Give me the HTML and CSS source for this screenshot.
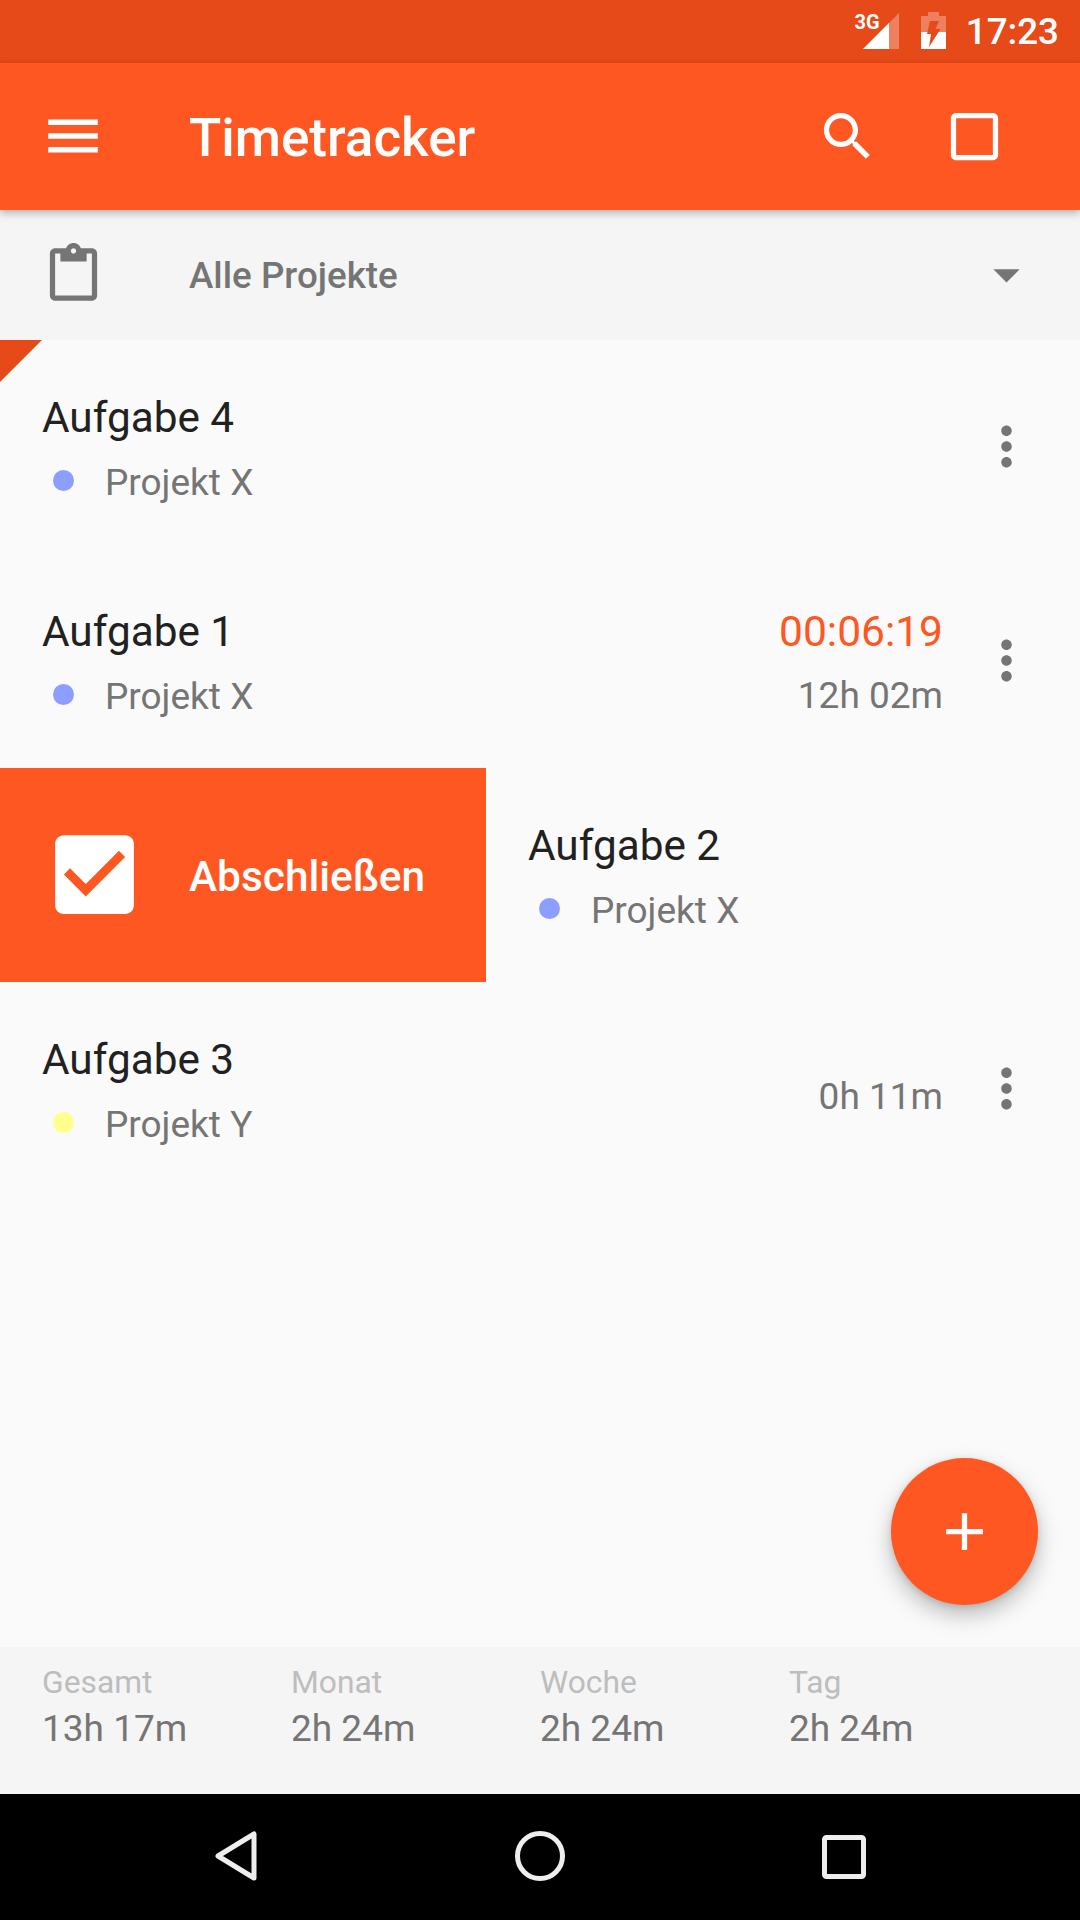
FILE: index.html
```html
<!DOCTYPE html>
<html lang="de">
<head>
<meta charset="utf-8">
<title>Timetracker</title>
<link rel="stylesheet" href="styles.css">
</head>
<body>
<div class="app">
  <div class="statusbar">
    <svg class="sb-signal" width="48" height="63" viewBox="0 0 48 63">
      <path d="M12 49 48 13V49Z" fill="#fff" fill-opacity=".3"/>
      <path d="M12 49 38 23V49Z" fill="#fff"/>
      <text x="3.5" y="29" class="sb-3g">3G</text>
    </svg>
    <svg class="sb-battery" width="25" height="63" viewBox="0 0 25 63">
      <path d="M0 16H7V12H18V16H25V49H0Z" fill="#fff" fill-opacity=".3"/>
      <path d="M0 32H25V49H0Z" fill="#fff"/>
      <path d="M9 21H18L14.5 29H19.5L8 47 10 34H6Z" fill="#E64A19"/>
    </svg>
    <span class="sb-time">17:23</span>
  </div>

  <header class="appbar">
    <svg class="icon icon-menu" viewBox="0 0 24 24"><path d="M3 18h18v-2H3v2zm0-5h18v-2H3v2zm0-7v2h18V6H3z"/></svg>
    <h1 class="appbar-title">Timetracker</h1>
    <svg class="icon" viewBox="0 0 24 24"><path d="M15.5 14h-.79l-.28-.27C15.41 12.59 16 11.11 16 9.5 16 5.91 13.09 3 9.5 3S3 5.91 3 9.5 5.91 16 9.5 16c1.61 0 3.09-.59 4.23-1.57l.27.28v.79l5 4.99L20.49 19l-4.99-5zm-6 0C7.01 14 5 11.99 5 9.5S7.01 5 9.5 5 14 7.01 14 9.5 11.99 14 9.5 14z"/></svg>
    <svg class="icon icon-stop" viewBox="0 0 24 24"><path d="M19 5v14H5V5h14m0-2H5c-1.1 0-2 .9-2 2v14c0 1.1.9 2 2 2h14c1.1 0 2-.9 2-2V5c0-1.1-.9-2-2-2z"/></svg>
  </header>

  <div class="filterbar">
    <svg class="icon icon-grey" viewBox="0 0 24 24"><path d="M19 2h-4.18C14.4.84 13.3 0 12 0c-1.3 0-2.4.84-2.82 2H5c-1.1 0-2 .9-2 2v16c0 1.1.9 2 2 2h14c1.1 0 2-.9 2-2V4c0-1.1-.9-2-2-2zm-7 0c.55 0 1 .45 1 1s-.45 1-1 1-1-.45-1-1 .45-1 1-1zm7 18H5V4h2v3h10V4h2v16z"/></svg>
    <span class="filter-label">Alle Projekte</span>
    <svg class="icon icon-grey" viewBox="0 0 24 24"><path d="M7 10l5 5 5-5z"/></svg>
  </div>

  <main class="list">
    <div class="corner"></div>

    <div class="task">
      <div class="task-body">
        <div class="task-title">Aufgabe 4</div>
        <div class="task-project"><span class="dot dot-blue"></span>Projekt X</div>
      </div>
      <svg class="icon icon-grey icon-more" viewBox="0 0 24 24"><path d="M12 8c1.1 0 2-.9 2-2s-.9-2-2-2-2 .9-2 2 .9 2 2 2zm0 2c-1.1 0-2 .9-2 2s.9 2 2 2 2-.9 2-2-.9-2-2-2zm0 6c-1.1 0-2 .9-2 2s.9 2 2 2 2-.9 2-2-.9-2-2-2z"/></svg>
    </div>

    <div class="task">
      <div class="task-body">
        <div class="task-title">Aufgabe 1</div>
        <div class="task-project"><span class="dot dot-blue"></span>Projekt X</div>
      </div>
      <div class="task-times">
        <div class="timer">00:06:19</div>
        <div class="duration">12h 02m</div>
      </div>
      <svg class="icon icon-grey icon-more" viewBox="0 0 24 24"><path d="M12 8c1.1 0 2-.9 2-2s-.9-2-2-2-2 .9-2 2 .9 2 2 2zm0 2c-1.1 0-2 .9-2 2s.9 2 2 2 2-.9 2-2-.9-2-2-2zm0 6c-1.1 0-2 .9-2 2s.9 2 2 2 2-.9 2-2-.9-2-2-2z"/></svg>
    </div>

    <div class="task task-swiped">
      <div class="swipe-action">
        <svg class="swipe-icon" viewBox="0 0 24 24"><path d="M19 3H5c-1.11 0-2 .9-2 2v14c0 1.1.89 2 2 2h14c1.11 0 2-.9 2-2V5c0-1.1-.89-2-2-2zm-9 14l-5-5 1.41-1.41L10 14.17l7.59-7.59L19 8l-9 9z"/></svg>
        <span class="swipe-label">Abschließen</span>
      </div>
      <div class="task-body">
        <div class="task-title">Aufgabe 2</div>
        <div class="task-project"><span class="dot dot-blue"></span>Projekt X</div>
      </div>
    </div>

    <div class="task">
      <div class="task-body">
        <div class="task-title">Aufgabe 3</div>
        <div class="task-project"><span class="dot dot-yellow"></span>Projekt Y</div>
      </div>
      <div class="task-times task-times-single">
        <div class="duration">0h 11m</div>
      </div>
      <svg class="icon icon-grey icon-more" viewBox="0 0 24 24"><path d="M12 8c1.1 0 2-.9 2-2s-.9-2-2-2-2 .9-2 2 .9 2 2 2zm0 2c-1.1 0-2 .9-2 2s.9 2 2 2 2-.9 2-2-.9-2-2-2zm0 6c-1.1 0-2 .9-2 2s.9 2 2 2 2-.9 2-2-.9-2-2-2z"/></svg>
    </div>

    <button class="fab" type="button" aria-label="Neu">
      <svg class="fab-icon" viewBox="0 0 24 24"><path d="M19 13h-6v6h-2v-6H5v-2h6V5h2v6h6v2z"/></svg>
    </button>
  </main>

  <footer class="summary">
    <div class="stat"><div class="stat-label">Gesamt</div><div class="stat-value">13h 17m</div></div>
    <div class="stat"><div class="stat-label">Monat</div><div class="stat-value">2h 24m</div></div>
    <div class="stat"><div class="stat-label">Woche</div><div class="stat-value">2h 24m</div></div>
    <div class="stat"><div class="stat-label">Tag</div><div class="stat-value">2h 24m</div></div>
  </footer>

  <nav class="navbar">
    <svg class="nav-back" width="44" height="52" viewBox="0 0 44 52"><path d="M40 4V48L4 26Z"/></svg>
    <svg class="nav-home" width="52" height="52" viewBox="0 0 52 52"><circle cx="26" cy="26" r="22.5"/></svg>
    <svg class="nav-recent" width="46" height="46" viewBox="0 0 46 46"><rect x="3.5" y="3.5" width="39" height="39" rx="2"/></svg>
  </nav>
</div>
</body>
</html>
```

FILE: styles.css
```css
* { box-sizing: border-box; }

html, body {
  margin: 0;
  padding: 0;
}

body {
  font-family: Roboto, "Noto Sans", sans-serif;
  background: #fafafa;
}

.app {
  width: 1080px;
  height: 1920px;
  display: flex;
  flex-direction: column;
  overflow: hidden;
}

/* Status bar */
.statusbar {
  height: 63px;
  flex: none;
  background: #e64a19;
  color: #fff;
  display: flex;
  align-items: center;
  justify-content: flex-end;
  padding-right: 21px;
}

.sb-signal { display: block; margin-right: 22px; }
.sb-battery { display: block; margin-right: 20px; }

.sb-3g {
  font-family: Roboto, sans-serif;
  font-size: 20px;
  font-weight: 700;
  fill: #fff;
}

.sb-time {
  font-size: 36.75px;
  font-weight: 500;
  line-height: 63px;
}

/* App bar */
.appbar {
  height: 147px;
  flex: none;
  background: #ff5722;
  color: #fff;
  display: flex;
  align-items: center;
  padding: 0 74px 1px 40px;
  position: relative;
  z-index: 2;
  box-shadow: 0 3px 8px rgba(0, 0, 0, .28);
}

.icon {
  width: 63px;
  height: 63px;
  flex: none;
  display: block;
  fill: currentColor;
}

.icon-menu {
  width: 66px;
  height: 66px;
}

.icon-stop { margin-left: 64px; }
.icon-grey { color: #757575; }
.icon-more { margin-bottom: 2px; }

.appbar-title {
  margin: 4px 0 0 83px;
  flex: 1;
  font-size: 53px;
  font-weight: 500;
  line-height: 64px;
}

/* Project filter */
.filterbar {
  height: 130px;
  flex: none;
  background: #f5f5f5;
  display: flex;
  align-items: center;
  padding: 0 42px 2px;
}

.filter-label {
  flex: 1;
  margin: 2px 0 0 84px;
  font-size: 36.75px;
  font-weight: 500;
  color: #757575;
}

/* Task list */
.list {
  flex: 1;
  position: relative;
  background: #fafafa;
}

.corner {
  position: absolute;
  left: 0;
  top: 0;
  width: 0;
  height: 0;
  border-top: 42px solid #e64a19;
  border-right: 42px solid transparent;
}

.task {
  height: 214px;
  display: flex;
  align-items: center;
  padding-right: 42px;
}

.task-swiped {
  padding-right: 0;
  align-items: stretch;
}

.task-body {
  flex: 1;
  align-self: flex-start;
  padding: 46px 0 0 42px;
}

.task-title {
  font-size: 42.3px;
  line-height: 64px;
  color: #212121;
}

.task-project {
  display: flex;
  align-items: center;
  font-size: 37px;
  line-height: 64px;
  padding-top: 1px;
  color: #757575;
}

.dot {
  width: 21px;
  height: 21px;
  border-radius: 50%;
  margin: -5px 31px 0 11px;
  flex: none;
}

.dot-blue { background: #8c9eff; }
.dot-yellow { background: #ffff8d; }

.task-times {
  text-align: right;
  margin-right: 32px;
  padding-top: 6px;
}

.task-times-single {
  padding-top: 16px;
}

.timer {
  font-size: 42.5px;
  line-height: 64px;
  color: #ff5722;
}

.duration {
  font-size: 37px;
  line-height: 64px;
  color: #757575;
}

.swipe-action {
  width: 486px;
  flex: none;
  background: #ff5722;
  color: #fff;
  display: flex;
  align-items: center;
  padding-left: 42px;
}

.swipe-icon {
  width: 105px;
  height: 105px;
  flex: none;
  fill: #fff;
  display: block;
  margin-bottom: 2px;
}

.swipe-label {
  margin: 2px 0 0 42px;
  font-size: 42.4px;
  font-weight: 500;
}

/* Floating action button */
.fab {
  position: absolute;
  left: 891px;
  top: 1118px;
  width: 147px;
  height: 147px;
  border: 0;
  padding: 0;
  border-radius: 50%;
  background: #ff5722;
  display: flex;
  align-items: center;
  justify-content: center;
  box-shadow: 0 10px 22px rgba(0, 0, 0, .25), 0 2px 6px rgba(0, 0, 0, .12);
}

.fab-icon {
  width: 63px;
  height: 63px;
  fill: #fff;
  display: block;
}

/* Summary */
.summary {
  height: 147px;
  flex: none;
  background: #f5f5f5;
  display: grid;
  grid-template-columns: repeat(4, 249px);
  padding: 13px 0 0 42px;
}

.stat-label {
  font-size: 31.8px;
  line-height: 44px;
  color: #bdbdbd;
}

.stat-value {
  font-size: 37px;
  line-height: 50px;
  color: #757575;
}

/* Navigation bar */
.navbar {
  height: 126px;
  flex: none;
  background: #000;
  position: relative;
}

.navbar svg {
  position: absolute;
  fill: none;
  stroke: #eee;
  stroke-width: 5px;
  stroke-linejoin: round;
}

.navbar .nav-back { left: 214px; top: 36px; }
.navbar .nav-home { left: 514px; top: 36px; }
.navbar .nav-recent { left: 821px; top: 40px; }
```
